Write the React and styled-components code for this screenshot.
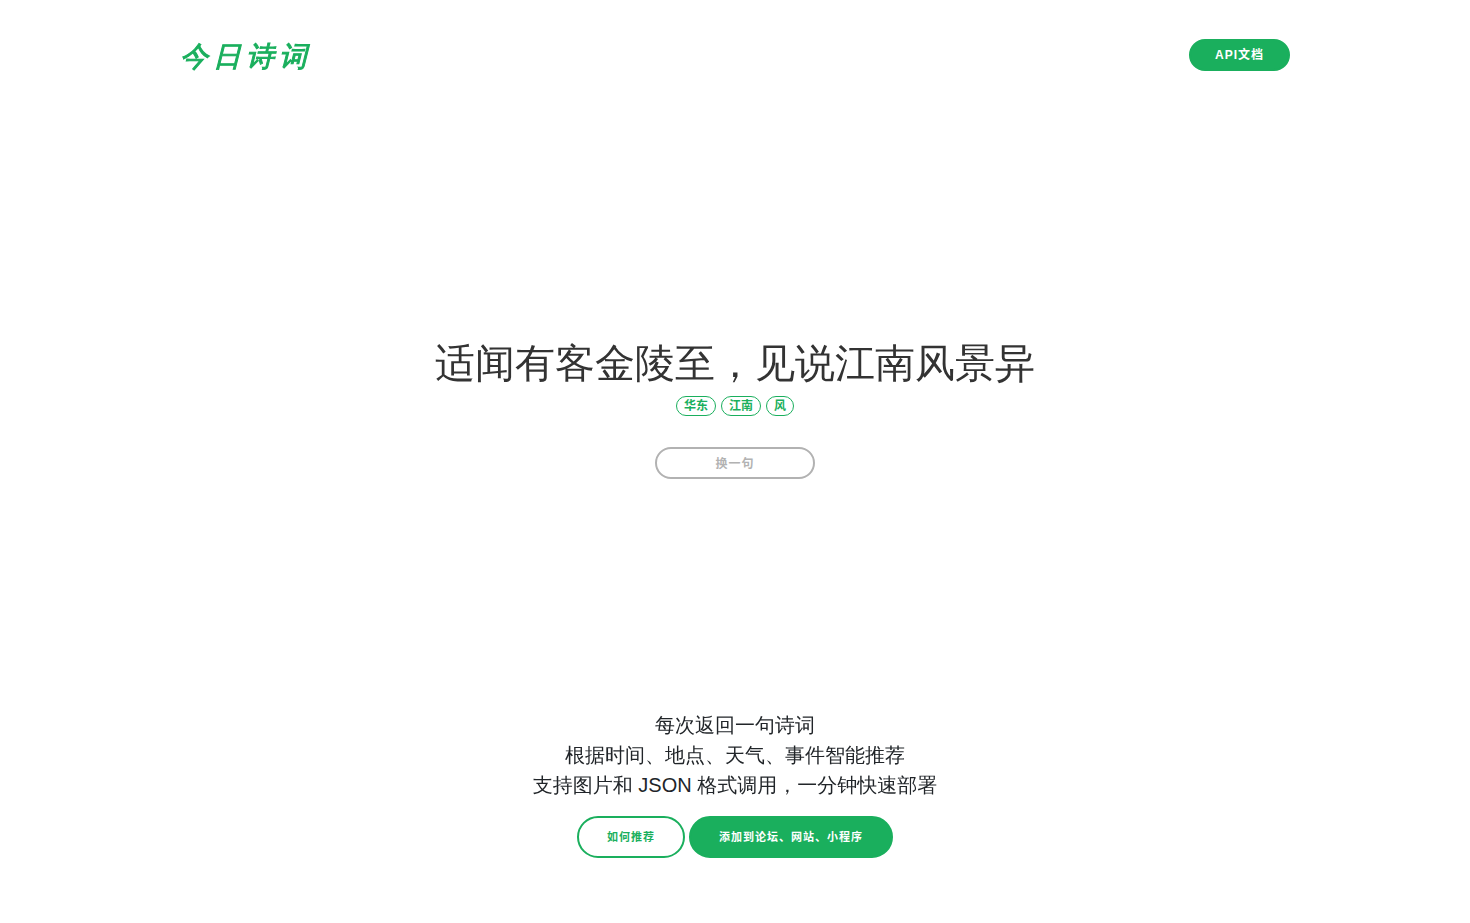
import styled, { createGlobalStyle } from 'styled-components';

const GlobalStyle = createGlobalStyle`
  :root {
    --green: #1aaf5d;
    --grey: #b2b2b2;
    --ink: #333333;
    --text: #212529;
    --font-body: "Liberation Sans", "WenQuanYi Zen Hei", "Noto Sans CJK SC", sans-serif;
    --font-bold: "Liberation Sans", "Noto Sans CJK SC", sans-serif;
  }
  *, *::before, *::after {
    box-sizing: border-box;
  }
  body {
    margin: 0;
    background: #ffffff;
    color: var(--text);
    font-family: var(--font-body);
  }
`;

const Page = styled.div`
  min-height: 100vh;
  display: flex;
  flex-direction: column;
`;

const Header = styled.header`
  width: 100%;
  max-width: 1140px;
  margin: 0 auto;
  padding: 39px 15px;
  display: flex;
  justify-content: space-between;
  align-items: center;
`;

const Logo = styled.a`
  padding-top: 4px;
  color: var(--green);
  font-size: 28px;
  font-style: italic;
  line-height: 28px;
  letter-spacing: 5px;
  -webkit-text-stroke: 1px var(--green);
  text-decoration: none;
`;

const PillLink = styled.a`
  display: inline-flex;
  justify-content: center;
  align-items: center;
  height: ${(props) => (props.$large ? '42px' : '32px')};
  padding: 0 ${(props) => (props.$large ? '28px' : '24px')};
  border: 2px solid var(--green);
  border-radius: 21px;
  background: ${(props) => (props.$outline ? 'transparent' : 'var(--green)')};
  color: ${(props) => (props.$outline ? 'var(--green)' : '#ffffff')};
  font-family: var(--font-bold);
  font-size: ${(props) => (props.$large ? '11px' : '12px')};
  font-weight: 700;
  line-height: 18px;
  letter-spacing: 1px;
  text-decoration: none;
`;

const Hero = styled.main`
  flex: 1;
  display: flex;
  flex-direction: column;
  justify-content: center;
  align-items: center;
  padding: 0 15px 2px;
`;

const Sentence = styled.h1`
  margin: 0 0 10px;
  color: var(--ink);
  font-size: 40px;
  font-weight: 400;
  line-height: 46px;
  text-align: center;
`;

const Tags = styled.ul`
  display: flex;
  gap: 5px;
  margin: 0 0 31px;
  padding: 0;
  list-style: none;
`;

const Tag = styled.li`
  padding: 0 7px;
  border: 1px solid var(--green);
  border-radius: 10px;
  color: var(--green);
  font-family: var(--font-bold);
  font-size: 12px;
  font-weight: 700;
  line-height: 18px;
`;

const NextButton = styled.button`
  width: 160px;
  height: 32px;
  padding: 0;
  border: 2px solid var(--grey);
  border-radius: 16px;
  background: transparent;
  color: var(--grey);
  font-family: var(--font-bold);
  font-size: 12px;
  font-weight: 700;
  letter-spacing: 1px;
  cursor: pointer;
`;

const Intro = styled.section`
  padding: 0 15px 65px;
  text-align: center;
`;

const IntroText = styled.p`
  margin: 0 0 16px;
  font-size: 20px;
  line-height: 30px;
`;

const Actions = styled.div`
  display: flex;
  flex-wrap: wrap;
  justify-content: center;
  gap: 4px;
`;

const tags = ['华东', '江南', '风'];

const App = () => {
  return (
    <>
      <GlobalStyle />
      <Page lang="zh-CN">
        <Header>
          <Logo href="#">今日诗词</Logo>
          <PillLink href="#docs">API文档</PillLink>
        </Header>

        <Hero>
          <Sentence>适闻有客金陵至，见说江南风景异</Sentence>
          <Tags>
            {tags.map((tag) => (
              <Tag key={tag}>{tag}</Tag>
            ))}
          </Tags>
          <NextButton type="button">换一句</NextButton>
        </Hero>

        <Intro>
          <IntroText>
            每次返回一句诗词
            <br />
            根据时间、地点、天气、事件智能推荐
            <br />
            支持图片和 JSON 格式调用，一分钟快速部署
          </IntroText>
          <Actions>
            <PillLink href="#how" $large $outline>
              如何推荐
            </PillLink>
            <PillLink href="#install" $large>
              添加到论坛、网站、小程序
            </PillLink>
          </Actions>
        </Intro>
      </Page>
    </>
  );
};

export default App;
